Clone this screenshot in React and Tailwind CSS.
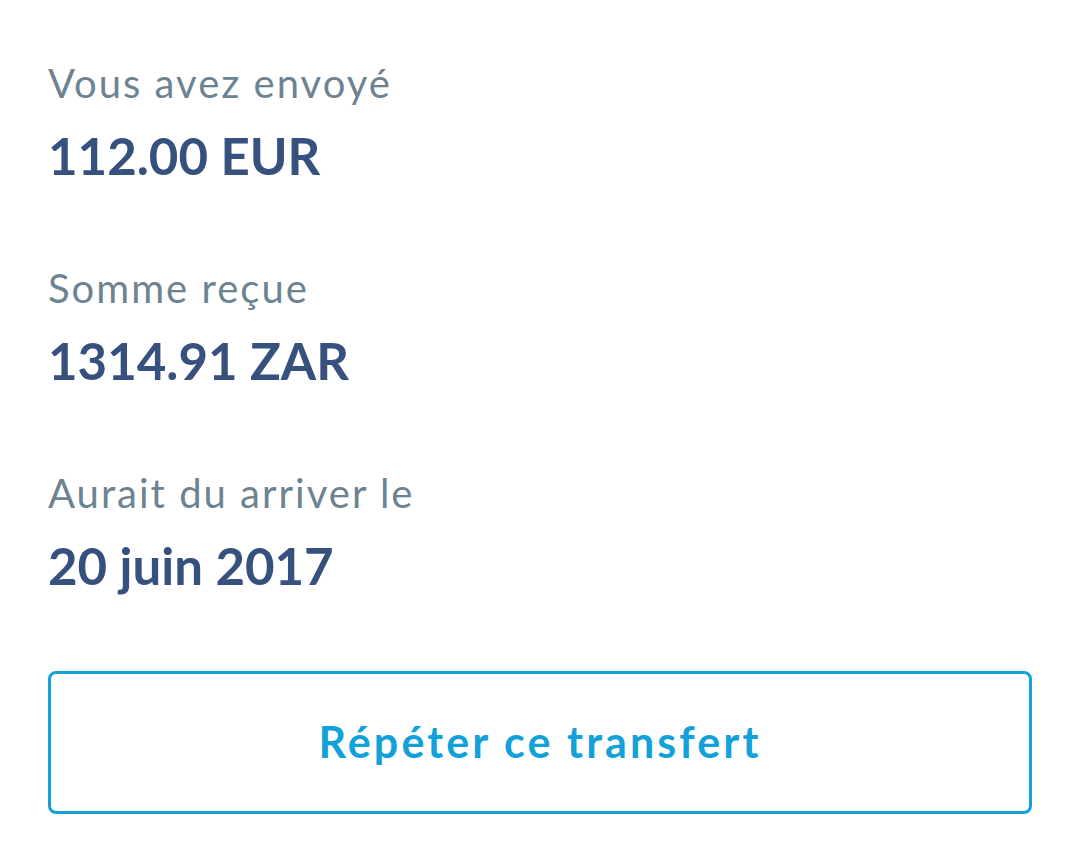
export default function App() {
  const rows = [
    { label: 'Vous avez envoyé', value: '112.00 EUR' },
    { label: 'Somme reçue', value: '1314.91 ZAR' },
    { label: 'Aurait du arriver le', value: '20 juin 2017' },
  ];

  return (
    <div className="w-[1080px] h-[849px] bg-white px-[48px] pt-[59px]" style={{ fontFamily: 'Lato, "Noto Sans", sans-serif' }}>
      {rows.map((r) => (
        <div key={r.label} className="h-[205px]">
          <p className="text-[40px] leading-[48px] tracking-[2px] text-[#6d8391]">{r.label}</p>
          <p className="mt-[18px] text-[51px] leading-[62px] font-bold text-[#37517e]">{r.value}</p>
        </div>
      ))}

      <button className="mt-[-3px] flex w-[984px] h-[143px] items-center justify-center border-[3px] border-[#12a2d9] rounded-[8px] text-[43px] tracking-[3.1px] font-bold text-[#12a2d9]">
        Répéter ce transfert
      </button>
    </div>
  );
}
